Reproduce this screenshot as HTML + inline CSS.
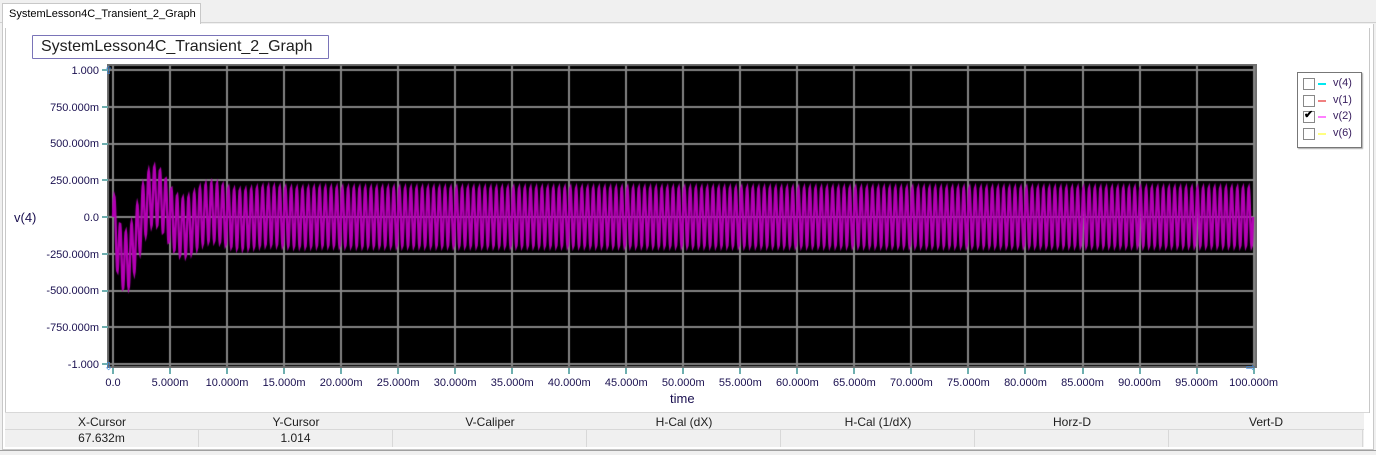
<!DOCTYPE html>
<html><head><meta charset="utf-8"><style>
body{margin:0;width:1376px;height:454px;background:#f0f0f0;position:relative;overflow:hidden;font-family:"Liberation Sans",sans-serif;}
.a{position:absolute;}
.yl{position:absolute;right:1277px;font-size:11px;color:#1a1050;line-height:12px;}
.xl{position:absolute;font-size:11px;color:#1a1050;line-height:12px;transform:translateX(-50%);}
.tk{position:absolute;background:#6fb0b0;}
.sh{position:absolute;top:414px;height:16px;font-size:12px;color:#202020;text-align:center;line-height:16px;}
.sv{position:absolute;top:430px;height:17px;font-size:12px;color:#202020;text-align:center;line-height:17px;border-right:1px solid #d8d8d8;}
.lg{position:absolute;font-size:11px;color:#3a2060;}
.cb{position:absolute;width:10px;height:10px;border:1px solid #888;background:#fff;}
.ln{position:absolute;width:8px;height:2px;}
</style></head><body>
<div class="a" style="left:0;top:22px;width:1376px;height:1px;background:#d0d0d0"></div>
<div class="a" style="left:2px;top:3px;width:197px;height:21px;background:#fff;border:1px solid #c8c8c8;border-bottom:none"></div>
<div class="a" style="left:9px;top:8px;font-size:11px;color:#000">SystemLesson4C_Transient_2_Graph</div>
<div class="a" style="left:2px;top:24px;width:1370px;height:425px;background:#fff;border:1px solid #c8c8c8;border-top:none"></div>
<div class="a" style="left:5px;top:28px;width:1363px;height:385px;border-left:1px solid #c8c8c8;border-right:1px solid #c8c8c8"></div>
<div class="a" style="left:32px;top:35px;border:1px solid #7a74b8;border-radius:1px;font-size:16px;line-height:22px;padding-left:8px;box-sizing:border-box;width:297px;height:24px;color:#202020">SystemLesson4C_Transient_2_Graph</div>
<canvas id="c" class="a" style="left:107px;top:64px" width="1150" height="304"></canvas>
<div class="yl" style="top:65px">1.000</div>
<div class="yl" style="top:102px">750.000m</div>
<div class="yl" style="top:138px">500.000m</div>
<div class="yl" style="top:175px">250.000m</div>
<div class="yl" style="top:212px">0.0</div>
<div class="yl" style="top:249px">-250.000m</div>
<div class="yl" style="top:285px">-500.000m</div>
<div class="yl" style="top:322px">-750.000m</div>
<div class="yl" style="top:359px">-1.000</div>
<div id="ticks"></div>
<div class="a" style="left:14px;top:210px;font-size:13px;color:#1a1050">v(4)</div>
<div class="a" style="left:670px;top:391px;font-size:13px;color:#1a1050">time</div>
<div class="a" style="left:1297px;top:72px;width:63px;height:74px;background:#fff;border:1px solid #777;box-shadow:1px 1px 1px #aaa"></div>
<div class="cb" style="left:1303px;top:78px"></div><div class="ln" style="left:1318px;top:83px;background:#00e8f0"></div><div class="lg" style="left:1333px;top:77px">v(4)</div>
<div class="cb" style="left:1303px;top:95px"></div><div class="ln" style="left:1318px;top:100px;background:#f08080"></div><div class="lg" style="left:1333px;top:94px">v(1)</div>
<div class="cb" style="left:1303px;top:111px"></div><div class="a" style="left:1304px;top:108px;font-size:11px;font-weight:bold">✔</div><div class="ln" style="left:1318px;top:116px;background:#ff80ff"></div><div class="lg" style="left:1333px;top:110px">v(2)</div>
<div class="cb" style="left:1303px;top:128px"></div><div class="ln" style="left:1318px;top:133px;background:#ffff80"></div><div class="lg" style="left:1333px;top:127px">v(6)</div>
<div class="a" style="left:5px;top:413px;width:1359px;height:34px;background:#f0f0f0"></div>
<div class="a" style="left:5px;top:412px;width:1364px;height:1px;background:#d8d8d8"></div>
<div class="a" style="left:5px;top:429px;width:1359px;height:1px;background:#d8d8d8"></div>
<div id="st"></div>
<div class="a" style="left:0;top:450px;width:1376px;height:4px;background:#f0f0f0;border-top:1px solid #a0a0a0"></div>
<script>
var c=document.getElementById('c').getContext('2d');
c.fillStyle='#000';c.fillRect(0,0,1150,304);
c.strokeStyle='#858585';c.lineWidth=2;
var X0=6,DX=57.03,Y0=6,DY=36.75;
for(var i=0;i<=20;i++){var x=Math.round(X0+i*DX);c.beginPath();c.moveTo(x,0);c.lineTo(x,304);c.stroke();}
for(var j=0;j<=8;j++){var y=Math.round(Y0+j*DY);c.beginPath();c.moveTo(0,y);c.lineTo(1150,y);c.stroke();}
c.strokeStyle='#707070';c.lineWidth=2;c.strokeRect(1,1,1148,302);
c.strokeStyle='#b400b4';c.lineWidth=2.4;c.beginPath();
for(var x=X0;x<=X0+1140;x+=0.3){var u=x-X0;
var v=0.2*Math.sin(2*Math.PI*u/5.7);
var off=-0.42*Math.sin(2*Math.PI*u/58)*Math.exp(-u/40);
var y=Y0+4*DY-(v+off)*4*DY;
if(x==X0)c.moveTo(x,y);else c.lineTo(x,y);}
c.stroke();
var t='',labs=['0.0'];for(var i=1;i<=20;i++)labs.push((i*5)+'.000m');
for(var i=0;i<=20;i++){var x=107+X0+i*DX;t+='<div class="xl" style="left:'+x+'px;top:377px">'+labs[i]+'</div><div class="tk" style="left:'+(x-1)+'px;top:368px;width:2px;height:6px"></div>';}
for(var j=0;j<=8;j++){var y=64+Y0+j*DY;t+='<div class="tk" style="left:102px;top:'+(y-1)+'px;width:6px;height:2px"></div>';}
t+='<div class="a" style="left:104px;top:64px;color:#3a8ae0;font-size:11px">⇧</div>';
t+='<div class="a" style="left:1246px;top:361px;color:#3a8ae0;font-size:11px">⇨</div>';
t+='<div class="a" style="left:104px;top:360px;color:#3a8ae0;font-size:11px">⇩</div>';
document.getElementById('ticks').innerHTML=t;
var h=['X-Cursor','Y-Cursor','V-Caliper','H-Cal (dX)','H-Cal (1/dX)','Horz-D','Vert-D'],vv=['67.632m','1.014','','','','',''];
var s='';for(var i=0;i<7;i++){var l=5+i*194;s+='<div class="sh" style="left:'+l+'px;width:194px">'+h[i]+'</div><div class="sv" style="left:'+l+'px;width:193px">'+vv[i]+'</div>';}
document.getElementById('st').innerHTML=s;
</script>
</body></html>
